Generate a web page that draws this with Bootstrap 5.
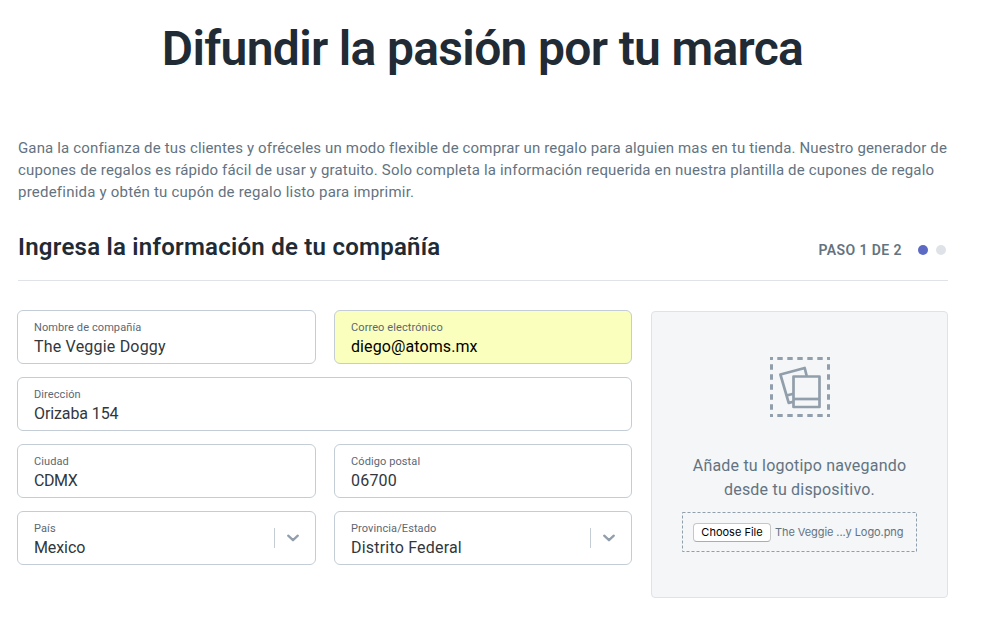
<!DOCTYPE html>
<html lang="es">
<head>
<meta charset="utf-8">
<meta name="viewport" content="width=device-width, initial-scale=1">
<title>Difundir la pasión por tu marca</title>
<link href="https://cdn.jsdelivr.net/npm/bootstrap@5.3.0/dist/css/bootstrap.min.css" rel="stylesheet">
<style>
body{font-family:Roboto,"Liberation Sans",sans-serif;color:#212b35;background:#fff}
.page{width:931px;margin-left:17px}
.hero{font-size:48px;line-height:56px;font-weight:600;letter-spacing:-.68px;padding-top:21px}
.intro{font-size:15px;line-height:22px;letter-spacing:.15px;color:#637381;margin-top:60px;padding-left:1px;white-space:nowrap}
.intro .mid-line{letter-spacing:.168px}
.intro .last-line{letter-spacing:.22px}
.section-head{height:78px;margin-left:1px;border-bottom:1px solid #dfe3e8}
.section-head h2{font-size:24px;line-height:30px;font-weight:600;letter-spacing:.25px;padding-top:29px}
.step{font-size:14px;line-height:20px;font-weight:600;letter-spacing:.42px;color:#637381;padding:37px 2px 0 0}
.step-label{margin-right:8px}
.dot{width:10px;height:10px;margin-top:5px;border-radius:50%;background:#dfe3e8}
.dot.on{background:#5c6ac4}
.form-area{margin-top:29px;gap:19px}
.fields{width:615px;display:grid;grid-template-columns:299px 298px;column-gap:18px;row-gap:13px;align-content:start}
.wide{grid-column:1 / 3}
.field{height:54px;border:1px solid #c4cdd5;border-radius:6px;padding:9px 0 0 16px;background:#fff}
.field label{font-size:11px;line-height:16px;letter-spacing:.1px;color:#5b6775}
.field input,.field select{appearance:none;border:0;outline:0;padding:0;background:none;font-size:16px;line-height:22px;height:22px;letter-spacing:.2px;color:#31373d}
.field .tight{letter-spacing:-.1px}
.field #city{letter-spacing:-.4px}
.filled{background:#faffbd}
.field.filled input{color:#000;letter-spacing:.1px}
.picker{width:41px;height:20px;margin-top:7px;padding-right:4px;border-left:1px solid #c4cdd5}
.upload{width:297px;height:287px;margin-top:1px;background:#f4f6f8;border:1px solid #dfe3e8;border-radius:4px;padding-top:45px}
.upload p{font-size:16px;line-height:24px;letter-spacing:.2px;color:#637381;margin:37px 0 10px}
.file-box{width:235px;height:40px;padding-left:11px}
.file-box svg{inset:0}
.choose{font-family:Inter,sans-serif;font-size:11px;line-height:16px;width:78px;height:19px;padding:0;border:1px solid #c6c6c6;border-bottom-color:#acacac;border-radius:4px;background:#fff;color:#000}
.filename{font-family:Inter,sans-serif;font-size:11px;letter-spacing:-.08px;color:#637381;margin-left:4px}
</style>
</head>
<body>
<main class="page">
  <h1 class="hero text-center mb-0">Difundir la pasión por tu marca</h1>
  <p class="intro mb-0">Gana la confianza de tus clientes y ofréceles un modo flexible de comprar un regalo para alguien mas en tu tienda. Nuestro generador de<br><span class="mid-line">cupones de regalos es rápido fácil de usar y gratuito. Solo completa la información requerida en nuestra plantilla de cupones de regalo</span><br><span class="last-line">predefinida y obtén tu cupón de regalo listo para imprimir.</span></p>
  <div class="section-head d-flex justify-content-between">
    <h2 class="mb-0">Ingresa la información de tu compañía</h2>
    <div class="step d-flex gap-2 align-items-start">
      <span class="step-label">PASO 1 DE 2</span>
      <span class="dot on"></span>
      <span class="dot"></span>
    </div>
  </div>
  <form class="form-area d-flex">
    <div class="fields">
      <div class="field d-flex flex-column"><label for="company">Nombre de compañía</label><input id="company" value="The Veggie Doggy"></div>
      <div class="field filled d-flex flex-column"><label for="email">Correo electrónico</label><input id="email" value="diego@atoms.mx"></div>
      <div class="field wide d-flex flex-column"><label for="street">Dirección</label><input class="tight" id="street" value="Orizaba 154"></div>
      <div class="field d-flex flex-column"><label for="city">Ciudad</label><input id="city" value="CDMX"></div>
      <div class="field d-flex flex-column"><label for="zip">Código postal</label><input id="zip" value="06700"></div>
      <div class="field d-flex">
        <div class="d-flex flex-column flex-grow-1"><label for="country">País</label><select class="tight" id="country"><option>Mexico</option></select></div>
        <div class="picker d-flex align-items-center justify-content-center"><svg width="14" height="10" viewBox="0 0 14 10" fill="none" stroke="#919eab" stroke-width="2.3" stroke-linecap="round" stroke-linejoin="round" aria-hidden="true"><path d="M2.200 2.700 7 7.200l4.800-4.500"/></svg></div>
      </div>
      <div class="field d-flex">
        <div class="d-flex flex-column flex-grow-1"><label for="state">Provincia/Estado</label><select id="state"><option>Distrito Federal</option></select></div>
        <div class="picker d-flex align-items-center justify-content-center"><svg width="14" height="10" viewBox="0 0 14 10" fill="none" stroke="#919eab" stroke-width="2.3" stroke-linecap="round" stroke-linejoin="round" aria-hidden="true"><path d="M2.200 2.700 7 7.200l4.800-4.500"/></svg></div>
      </div>
    </div>
    <div class="upload d-flex flex-column align-items-center">
      <svg width="60" height="60" viewBox="0 0 60 60" fill="none" stroke="#919eab" stroke-width="3" stroke-linejoin="round" aria-hidden="true">
        <path stroke-dasharray="5.400 4.600" stroke-dashoffset="2.700" d="M0 1.500H60M0 58.500H60M1.500 0V60M58.500 0V60"/>
        <path stroke-width="2.700" d="M23.500 44.700l-4.800 1.200L10.400 17.500 34.700 11l2 8M16.500 38.500l7-1.800"/>
        <rect x="23.500" y="19.500" width="26" height="30.500" stroke-width="2.700"/>
        <path stroke-width="2.700" d="M23.500 42h26"/>
      </svg>
      <p class="text-center">Añade tu logotipo navegando<br>desde tu dispositivo.</p>
      <div class="file-box position-relative d-flex align-items-center">
        <svg class="position-absolute" width="235" height="40" fill="none" aria-hidden="true"><rect x=".5" y=".5" width="234" height="39" stroke="#919eab" stroke-dasharray="3 2"/></svg>
        <button class="choose position-relative" type="button">Choose File</button><span class="filename">The Veggie ...y Logo.png</span>
      </div>
    </div>
  </form>
</main>
<script src="https://cdn.jsdelivr.net/npm/bootstrap@5.3.0/dist/js/bootstrap.bundle.min.js"></script>
</body>
</html>
